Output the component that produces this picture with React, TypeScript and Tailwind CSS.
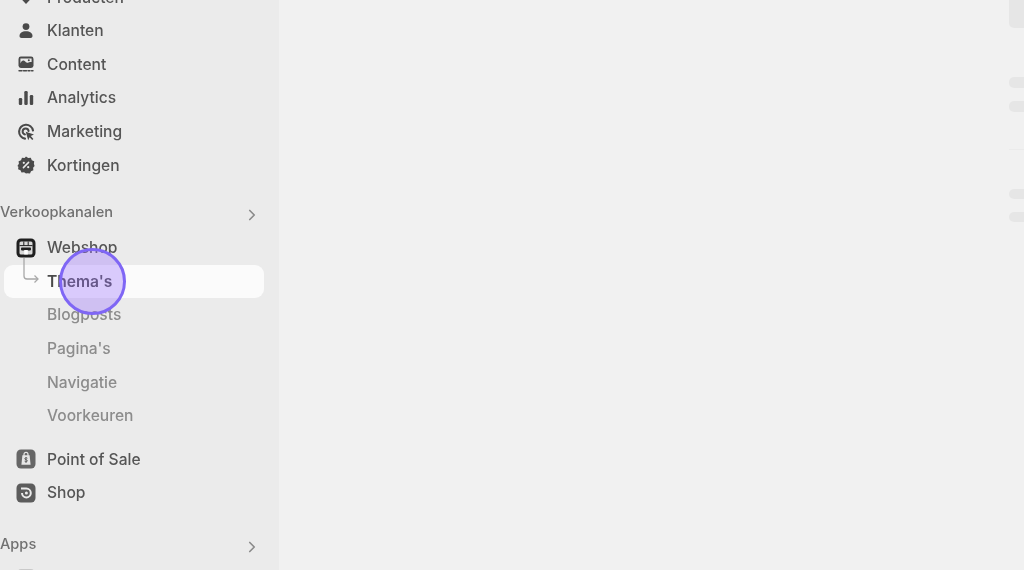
import { ChevronRight } from "lucide-react";

const iconClass = "w-[18px] h-[18px] text-[#4a4a4a]";

function Producten() {
  return (
    <svg viewBox="0 0 18 18" className={iconClass} fill="currentColor">
      <path d="M9 1 16 8.5 9 16 2 8.5Z" />
    </svg>
  );
}

function Klanten() {
  return (
    <svg viewBox="0 0 18 18" className={iconClass} fill="currentColor">
      <circle cx="9" cy="4.6" r="3.4" />
      <path d="M2.5 14c0-3 2.6-4.7 6.5-4.7s6.5 1.7 6.5 4.7c0 1.3-.8 2-2 2h-9c-1.2 0-2-.7-2-2Z" />
    </svg>
  );
}

function Content() {
  return (
    <svg viewBox="0 0 18 18" className={iconClass} fill="none">
      <rect x="1.5" y="1.5" width="15" height="11.5" rx="2.4" fill="currentColor" />
      <path d="M3.4 8.5c1-2.6 2.6-3.6 4.2-2.4 1.2.9 1.8 2 3.2 1.6 1.2-.3 2-1 3.8-.7V3.6H3.4Z" fill="#ebebeb" />
      <circle cx="11.8" cy="5.3" r="1" fill="currentColor" />
      <path d="M2 15.8h3M6.5 15.8h3M11 15.8h2M14.5 15.8h1.5" stroke="currentColor" strokeWidth="1.4" strokeLinecap="round" />
    </svg>
  );
}

function Analytics() {
  return (
    <svg viewBox="0 0 18 18" className={iconClass} fill="currentColor">
      <rect x="1.8" y="9" width="3.4" height="7" rx="1.2" />
      <rect x="7.3" y="2" width="3.4" height="14" rx="1.2" />
      <rect x="12.8" y="6" width="3.4" height="10" rx="1.2" />
    </svg>
  );
}

function Marketing() {
  return (
    <svg viewBox="0 0 18 18" className={iconClass} fill="none">
      <path d="M16 7.5A7 7 0 1 0 8 15.6" stroke="currentColor" strokeWidth="2.1" strokeLinecap="round" />
      <path d="M11.6 8a3 3 0 1 0-3.6 3.4" stroke="currentColor" strokeWidth="2" strokeLinecap="round" />
      <path d="M8.8 8.8 17 11.6l-3.2 1.5 2.6 2.8-1.2 1.1-2.6-2.8-1.4 3.1Z" fill="currentColor" />
    </svg>
  );
}

function Kortingen() {
  return (
    <svg viewBox="0 0 18 18" className={iconClass} fill="none">
      <path
        d="M9 .6l2.2 1.5 2.6-.3 1 2.4 2.4 1-.3 2.6L17.6 10l-1.5 1.7.3 2.6-2.4 1-1 2.1-2.6-.2L9 17.4l-1.9-1.2-2.6.2-1-2.1-2.4-1 .3-2.6L.4 10l1.5-2.2-.3-2.6 2.4-1 1-2.4 2.6.3Z"
        fill="currentColor"
      />
      <path d="M11.6 6.4 6.4 11.6" stroke="#ebebeb" strokeWidth="1.5" strokeLinecap="round" />
      <circle cx="6.8" cy="6.8" r="1.1" fill="#ebebeb" />
      <circle cx="11.2" cy="11.2" r="1.1" fill="#ebebeb" />
    </svg>
  );
}

function Webshop() {
  return (
    <svg viewBox="0 0 20 20" className="w-[20px] h-[20px]" fill="none">
      <rect x="0.5" y="0.5" width="19" height="19" rx="4.5" fill="#1f1f1f" />
      <rect x="3.5" y="3.5" width="13" height="13" rx="1.5" fill="#d9d9d9" />
      <path d="M3.5 7.6h13" stroke="#1f1f1f" strokeWidth="1" />
      <path d="M7.8 3.5v4M12.2 3.5v4" stroke="#1f1f1f" strokeWidth="1" />
      <rect x="5" y="9.4" width="10" height="3" rx="0.8" fill="#1f1f1f" />
      <rect x="8.2" y="12" width="3.6" height="4.5" fill="#ffffff" />
    </svg>
  );
}

function PointOfSale() {
  return (
    <svg viewBox="0 0 20 20" className="w-[20px] h-[20px]" fill="none">
      <rect x="0.5" y="0.5" width="19" height="19" rx="4.5" fill="#666666" />
      <path d="M6.4 6.2h7.2l1 9.6H5.4Z" fill="#e6e6e6" />
      <path d="M8 7V5.4a2 2 0 0 1 4 0V7" stroke="#e6e6e6" strokeWidth="1.2" />
      <path d="M11.4 9.2c-.5-.6-2.6-.7-2.6.5 0 1.3 2.6.8 2.6 2.1 0 1.2-2.2 1.1-2.8.4M10 8.2v5.6" stroke="#555555" strokeWidth="0.9" />
    </svg>
  );
}

function Shop() {
  return (
    <svg viewBox="0 0 20 20" className="w-[20px] h-[20px]" fill="none">
      <rect x="0.5" y="0.5" width="19" height="19" rx="4.5" fill="#5c5c5c" />
      <path d="M5 5.6h5.4a4.4 4.4 0 1 1-4.4 4.4" stroke="#ebebeb" strokeWidth="2" />
      <circle cx="10.4" cy="10" r="1.5" fill="#ebebeb" />
    </svg>
  );
}

function Row({ icon, label }: { icon: React.ReactNode; label: string }) {
  return (
    <div className="flex h-[33.6px] items-center pl-[16px]">
      <span className="flex w-[20px] justify-center">{icon}</span>
      <span className="ml-[11px] text-[#555555]">{label}</span>
    </div>
  );
}

function SubRow({ label }: { label: string }) {
  return <div className="flex h-[33.6px] items-center pl-[47px] text-[#8c8c8c]">{label}</div>;
}

function SectionHead({ label }: { label: string }) {
  return (
    <div className="flex h-[33px] items-center justify-between pr-[18px] text-[14.6px] text-[#707070]">
      <span className="mt-[3px]">{label}</span>
      <ChevronRight className="mt-[8px] h-[18px] w-[18px] text-[#8a8a8a]" strokeWidth={2.2} />
    </div>
  );
}

export default function App() {
  return (
    <div className="relative h-[575px] w-[1024px] overflow-hidden bg-white font-['Inter',sans-serif] text-[15.6px] font-medium">
      <div className="flex h-[570px] overflow-hidden bg-[#f1f1f1] blur-[0.7px]">
        <aside className="h-full w-[279px] shrink-0 bg-[#ebebeb]">
          <div className="-mt-[19.5px]">
            <Row icon={<Producten />} label="Producten" />
            <Row icon={<Klanten />} label="Klanten" />
            <Row icon={<Content />} label="Content" />
            <Row icon={<Analytics />} label="Analytics" />
            <Row icon={<Marketing />} label="Marketing" />
            <Row icon={<Kortingen />} label="Kortingen" />
          </div>

          <div className="mb-[3.5px] mt-[12.5px]">
            <SectionHead label="Verkoopkanalen" />
          </div>

          <div className="relative">
            <Row icon={<Webshop />} label="Webshop" />
            <div className="relative ml-[4px] mr-[15px] flex h-[33.6px] items-center rounded-[9px] bg-[#fbfbfb] pl-[43px] font-semibold text-[#4a4a4a]">
              Thema's
              <svg viewBox="0 0 20 30" className="absolute left-[18px] -top-[7px] h-[30px] w-[20px]" fill="none" stroke="#a8a8a8" strokeWidth="1.3">
                <path d="M2 0v18c0 2 1 3 3 3h11" />
                <path d="M12.5 17.5 16 21l-3.5 3.5" />
              </svg>
            </div>
            <SubRow label="Blogposts" />
            <SubRow label="Pagina's" />
            <SubRow label="Navigatie" />
            <SubRow label="Voorkeuren" />
          </div>

          <div className="mt-[10px]">
            <Row icon={<PointOfSale />} label="Point of Sale" />
            <Row icon={<Shop />} label="Shop" />
          </div>

          <div className="mt-[17px]">
            <SectionHead label="Apps" />
          </div>
          <div className="ml-[18px] mt-[9px] h-[18px] w-[16px] rounded-[3px] bg-[#c9c9c9]" />
        </aside>

        <main className="flex-1">
          <div className="ml-auto flex h-full w-[15px] flex-col">
            <div className="h-[28px] rounded-bl-[5px] bg-[#e6e6e6]" />
            <div className="mt-[49px] h-[11px] rounded-l-[5px] bg-[#e6e6e6]" />
            <div className="mt-[13px] h-[11px] rounded-l-[5px] bg-[#e6e6e6]" />
            <div className="mt-[37px] h-px bg-[#ebebeb]" />
            <div className="mt-[39px] h-[10px] rounded-l-[5px] bg-[#e6e6e6]" />
            <div className="mt-[13px] h-[10px] rounded-l-[5px] bg-[#e6e6e6]" />
          </div>
        </main>
      </div>

      {/* cursor highlight */}
      <div className="absolute left-[59px] top-[248px] h-[67px] w-[67px] rounded-full border-[3px] border-[#7f66f5] bg-[#9a70ff]/35" />
    </div>
  );
}
